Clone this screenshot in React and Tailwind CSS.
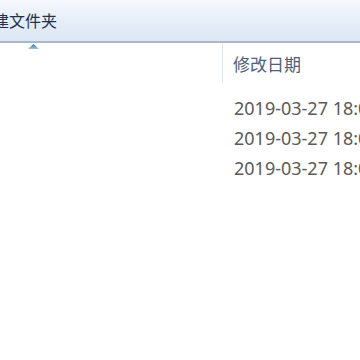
import React from "react";

const rows = ["2019-03-27 18:05", "2019-03-27 18:05", "2019-03-27 18:06"];

const App = () => {
  return (
    <div
      className="w-[360px] h-[360px] overflow-hidden bg-white flex flex-col"
      style={{ fontFamily: '"Noto Sans", "Noto Sans CJK SC", sans-serif' }}
    >
      {/* toolbar */}
      <div className="h-[41px] shrink-0 bg-gradient-to-b from-[#f6f9fd] via-[#e6eef8] to-[#dce6f4] flex items-center overflow-hidden">
        <span className="ml-[-23px] text-[16px] text-[#1e3350] whitespace-nowrap leading-none">
          新建文件夹
        </span>
      </div>
      <div className="h-[2px] shrink-0 bg-[#aab8cb]" />

      {/* column header */}
      <div className="relative h-[40px] shrink-0 flex">
        <div className="w-[223px] border-r border-[#e3e8f0] relative">
          <svg
            className="absolute left-[28px] top-[1px]"
            width="11"
            height="6"
            viewBox="0 0 11 6"
          >
            <defs>
              <linearGradient id="arr" x1="0" y1="0" x2="0" y2="1">
                <stop offset="0" stopColor="#3c6b96" />
                <stop offset="1" stopColor="#9cc8e8" />
              </linearGradient>
            </defs>
            <polygon points="5.5,0 11,5 0,5" fill="url(#arr)" />
          </svg>
        </div>
        <div className="pl-[10px] pt-[10px] text-[17px] text-[#4c607a] whitespace-nowrap leading-[24px]">
          修改日期
        </div>
      </div>

      {/* rows */}
      <div className="flex flex-col pt-[13px] pl-[234px] gap-[6px]">
        {rows.map((r, i) => (
          <div
            key={i}
            className="h-[24px] text-[18px] leading-[24px] text-[#5a5a5a] whitespace-nowrap"
          >
            {r}
          </div>
        ))}
      </div>
    </div>
  );
};

export default App;
